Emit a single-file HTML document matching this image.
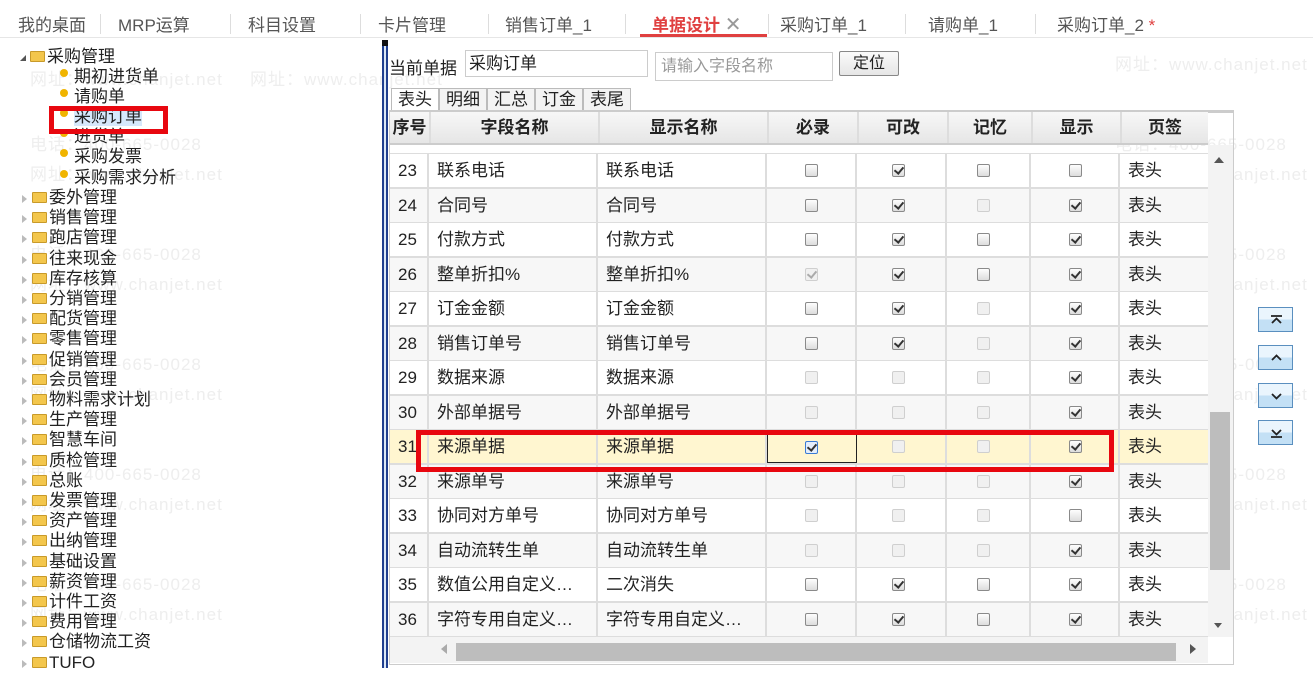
<!DOCTYPE html>
<html><head><meta charset="utf-8"><style>
*{margin:0;padding:0;box-sizing:border-box}
body{width:1313px;height:668px;overflow:hidden;background:#fff;font-family:"Liberation Sans","Noto Sans CJK SC",sans-serif;position:relative;color:#222}
.a{position:absolute;white-space:nowrap}
.tab{position:absolute;top:11px;font-size:17px;color:#555}
.sep{position:absolute;top:14px;width:1px;height:20px;background:#ddd}
.tr{position:absolute;font-size:17px;line-height:20px;left:0}
.fo{display:inline-block;width:15px;height:11px;background:#f3c64c;border:1px solid #c89a2a;border-radius:1px;vertical-align:middle;margin-right:2px;position:relative;top:-1px}
.ar{display:inline-block;width:0;height:0;border-left:5px solid #bbb;border-top:4px solid transparent;border-bottom:4px solid transparent;margin:0 5px 0 22px;vertical-align:middle}
.dot{display:inline-block;width:8px;height:8px;border-radius:50%;background:#f0b400;margin:0 6px 0 60px;vertical-align:middle;position:relative;top:-5px}
.wm{position:absolute;font-size:17px;color:#eee;letter-spacing:1px}
.row{position:absolute;left:390px;width:818px;height:35px;border-bottom:2px solid #ddd;font-size:17px}
.c{position:absolute;top:0;height:100%;border-right:2px solid #ddd;line-height:33px;padding-left:8px}
.cb{position:absolute;top:10px;width:13px;height:13px;border:1px solid #8a8a8a;border-radius:2px;background:linear-gradient(#fdfdfd,#dcdcdc)}
.cb.d{border-color:#cfcfcf;background:#f0f0f0}
.cb.k::after{content:"";position:absolute;left:3px;top:0px;width:4px;height:7px;border-right:2px solid #333;border-bottom:2px solid #333;transform:rotate(40deg)}
.cb.d.k::after{border-color:#aaa}
.btn{position:absolute;left:1258px;width:35px;height:25px;border:1px solid #5a8fbf;background:linear-gradient(#eaf5fd 50%,#c3e0f5 50%)}
.btn svg{position:absolute;left:11px;top:6px}
</style></head><body>
<div class="wm" style="left:30px;top:65px">网址：www.chanjet.net</div>
<div class="wm" style="left:250px;top:65px">网址：www.chanjet.net</div>
<div class="wm" style="left:30px;top:130px">电话：400-665-0028</div>
<div class="wm" style="left:30px;top:160px">网址：www.chanjet.net</div>
<div class="wm" style="left:30px;top:240px">电话：400-665-0028</div>
<div class="wm" style="left:30px;top:270px">网址：www.chanjet.net</div>
<div class="wm" style="left:30px;top:350px">电话：400-665-0028</div>
<div class="wm" style="left:30px;top:380px">网址：www.chanjet.net</div>
<div class="wm" style="left:30px;top:460px">电话：400-665-0028</div>
<div class="wm" style="left:30px;top:490px">网址：www.chanjet.net</div>
<div class="wm" style="left:30px;top:570px">电话：400-665-0028</div>
<div class="wm" style="left:30px;top:600px">网址：www.chanjet.net</div>
<div class="wm" style="left:1115px;top:50px">网址：www.chanjet.net</div>
<div class="wm" style="left:1115px;top:130px">电话：400-665-0028</div>
<div class="wm" style="left:1115px;top:160px">网址：www.chanjet.net</div>
<div class="wm" style="left:1115px;top:240px">电话：400-665-0028</div>
<div class="wm" style="left:1115px;top:270px">网址：www.chanjet.net</div>
<div class="wm" style="left:1115px;top:350px">电话：400-665-0028</div>
<div class="wm" style="left:1115px;top:380px">网址：www.chanjet.net</div>
<div class="wm" style="left:1115px;top:460px">电话：400-665-0028</div>
<div class="wm" style="left:1115px;top:490px">网址：www.chanjet.net</div>
<div class="wm" style="left:1115px;top:570px">电话：400-665-0028</div>
<div class="wm" style="left:1115px;top:600px">网址：www.chanjet.net</div>

<div class="tab" style="left:18px">我的桌面</div><div class="sep" style="left:100px"></div>
<div class="tab" style="left:118px">MRP运算</div><div class="sep" style="left:230px"></div>
<div class="tab" style="left:248px">科目设置</div><div class="sep" style="left:360px"></div>
<div class="tab" style="left:378px">卡片管理</div><div class="sep" style="left:488px"></div>
<div class="tab" style="left:505px">销售订单_1</div><div class="sep" style="left:625px"></div>
<div class="tab" style="left:652px;color:#e04040;font-weight:bold">单据设计 <span style="color:#999;font-weight:normal;font-size:20px;line-height:16px">✕</span></div>
<div class="a" style="left:640px;top:34px;width:127px;height:3px;background:#e04040"></div>
<div class="sep" style="left:768px"></div>
<div class="tab" style="left:780px">采购订单_1</div><div class="sep" style="left:905px"></div>
<div class="tab" style="left:928px">请购单_1</div><div class="sep" style="left:1035px"></div>
<div class="tab" style="left:1057px">采购订单_2 <span style="color:#e04040">*</span></div>
<div class="a" style="left:0;top:37px;width:1313px;height:1px;background:#e6e6e6"></div>

<div class="tr" style="top:47px"><span style="display:inline-block;width:0;height:0;border-right:6px solid #555;border-top:6px solid transparent;margin:0 4px 0 20px;vertical-align:middle"></span><span class="fo"></span>采购管理</div>
<div class="tr" style="top:67px"><span class="dot"></span>期初进货单</div>
<div class="tr" style="top:87px"><span class="dot"></span>请购单</div>
<div class="tr" style="top:107px"><span class="dot"></span><span style="background:#d6e8fb">采购订单</span></div>
<div class="tr" style="top:127px"><span class="dot"></span>进货单</div>
<div class="tr" style="top:147px"><span class="dot"></span>采购发票</div>
<div class="tr" style="top:168px"><span class="dot"></span>采购需求分析</div>
<div class="a" style="left:49px;top:106px;width:119px;height:28px;border:5px solid #e8070f"></div>
<div class="tr" style="top:188px"><span class="ar"></span><span class="fo"></span>委外管理</div>
<div class="tr" style="top:208px"><span class="ar"></span><span class="fo"></span>销售管理</div>
<div class="tr" style="top:228px"><span class="ar"></span><span class="fo"></span>跑店管理</div>
<div class="tr" style="top:249px"><span class="ar"></span><span class="fo"></span>往来现金</div>
<div class="tr" style="top:269px"><span class="ar"></span><span class="fo"></span>库存核算</div>
<div class="tr" style="top:289px"><span class="ar"></span><span class="fo"></span>分销管理</div>
<div class="tr" style="top:309px"><span class="ar"></span><span class="fo"></span>配货管理</div>
<div class="tr" style="top:329px"><span class="ar"></span><span class="fo"></span>零售管理</div>
<div class="tr" style="top:350px"><span class="ar"></span><span class="fo"></span>促销管理</div>
<div class="tr" style="top:370px"><span class="ar"></span><span class="fo"></span>会员管理</div>
<div class="tr" style="top:390px"><span class="ar"></span><span class="fo"></span>物料需求计划</div>
<div class="tr" style="top:410px"><span class="ar"></span><span class="fo"></span>生产管理</div>
<div class="tr" style="top:430px"><span class="ar"></span><span class="fo"></span>智慧车间</div>
<div class="tr" style="top:451px"><span class="ar"></span><span class="fo"></span>质检管理</div>
<div class="tr" style="top:471px"><span class="ar"></span><span class="fo"></span>总账</div>
<div class="tr" style="top:491px"><span class="ar"></span><span class="fo"></span>发票管理</div>
<div class="tr" style="top:511px"><span class="ar"></span><span class="fo"></span>资产管理</div>
<div class="tr" style="top:531px"><span class="ar"></span><span class="fo"></span>出纳管理</div>
<div class="tr" style="top:552px"><span class="ar"></span><span class="fo"></span>基础设置</div>
<div class="tr" style="top:572px"><span class="ar"></span><span class="fo"></span>薪资管理</div>
<div class="tr" style="top:592px"><span class="ar"></span><span class="fo"></span>计件工资</div>
<div class="tr" style="top:612px"><span class="ar"></span><span class="fo"></span>费用管理</div>
<div class="tr" style="top:632px"><span class="ar"></span><span class="fo"></span>仓储物流工资</div>
<div class="tr" style="top:653px"><span class="ar"></span><span class="fo"></span>TUFO</div>

<div class="a" style="left:382px;top:40px;width:6px;height:628px;background:#dbe7f5;border-left:2px solid #1f3f8f;border-right:2px solid #1f3f8f"></div>
<div class="a" style="left:382px;top:40px;width:6px;height:6px;background:#111"></div>

<div class="a" style="left:389px;top:54px;font-size:17px">当前单据</div>
<div class="a" style="left:465px;top:50px;width:183px;height:27px;border:1px solid #ccc;font-size:17px;line-height:26px;padding-left:3px">采购订单</div>
<div class="a" style="left:655px;top:52px;width:178px;height:29px;border:1px solid #ccc;font-size:16px;line-height:28px;padding-left:5px;color:#999">请输入字段名称</div>
<div class="a" style="left:839px;top:51px;width:60px;height:25px;border:1px solid #888;background:linear-gradient(#fafafa,#e6e6e6);font-size:16px;text-align:center;line-height:23px;border-radius:2px">定位</div>
<div class="a" style="left:391px;top:88px;font-size:17px;line-height:22px">
<span style="display:inline-block;border:1px solid #bbb;border-bottom:none;padding:0 6px;background:#fff">表头</span><span style="display:inline-block;border:1px solid #bbb;padding:0 6px;background:#f3f3f3">明细</span><span style="display:inline-block;border:1px solid #bbb;padding:0 6px;background:#f3f3f3">汇总</span><span style="display:inline-block;border:1px solid #bbb;padding:0 6px;background:#f3f3f3">订金</span><span style="display:inline-block;border:1px solid #bbb;padding:0 6px;background:#f3f3f3">表尾</span></div>

<div class="a" style="left:389px;top:110px;width:845px;height:555px;border:1px solid #ccc;border-top:3px solid #ccc"></div>
<div class="a" style="left:390px;top:112px;width:818px;height:33px;background:linear-gradient(#f7f7f7,#e6e6e6);border-bottom:2px solid #ccc;font-size:17px;font-weight:bold;line-height:31px">
<div class="a" style="left:0;width:39px;text-align:center">序号</div>
<div class="a" style="left:39px;width:169px;text-align:center;border-left:2px solid #ddd">字段名称</div>
<div class="a" style="left:208px;width:169px;text-align:center;border-left:2px solid #ddd">显示名称</div>
<div class="a" style="left:377px;width:90px;text-align:center;border-left:2px solid #ddd">必录</div>
<div class="a" style="left:467px;width:90px;text-align:center;border-left:2px solid #ddd">可改</div>
<div class="a" style="left:557px;width:84px;text-align:center;border-left:2px solid #ddd">记忆</div>
<div class="a" style="left:641px;width:89px;text-align:center;border-left:2px solid #ddd">显示</div>
<div class="a" style="left:730px;width:88px;text-align:center;border-left:2px solid #ddd">页签</div>
</div>
<div class="a" style="left:390px;top:145px;width:818px;height:10px;border-bottom:2px solid #ddd"></div>

<div class="row" style="top:154px;background:#fff"><div class="c" style="left:0;width:39px">23</div><div class="c" style="left:39px;width:169px">联系电话</div><div class="c" style="left:208px;width:169px">联系电话</div><div class="c" style="left:377px;width:90px"><i class="cb" style="left:38px"></i></div><div class="c" style="left:467px;width:90px"><i class="cb k" style="left:35px"></i></div><div class="c" style="left:557px;width:84px"><i class="cb" style="left:30px"></i></div><div class="c" style="left:641px;width:89px"><i class="cb" style="left:38px"></i></div><div class="c" style="left:730px;width:88px;border:none">表头</div></div>
<div class="row" style="top:189px;background:#f7f7f7"><div class="c" style="left:0;width:39px">24</div><div class="c" style="left:39px;width:169px">合同号</div><div class="c" style="left:208px;width:169px">合同号</div><div class="c" style="left:377px;width:90px"><i class="cb" style="left:38px"></i></div><div class="c" style="left:467px;width:90px"><i class="cb k" style="left:35px"></i></div><div class="c" style="left:557px;width:84px"><i class="cb d" style="left:30px"></i></div><div class="c" style="left:641px;width:89px"><i class="cb k" style="left:38px"></i></div><div class="c" style="left:730px;width:88px;border:none">表头</div></div>
<div class="row" style="top:223px;background:#fff"><div class="c" style="left:0;width:39px">25</div><div class="c" style="left:39px;width:169px">付款方式</div><div class="c" style="left:208px;width:169px">付款方式</div><div class="c" style="left:377px;width:90px"><i class="cb" style="left:38px"></i></div><div class="c" style="left:467px;width:90px"><i class="cb k" style="left:35px"></i></div><div class="c" style="left:557px;width:84px"><i class="cb" style="left:30px"></i></div><div class="c" style="left:641px;width:89px"><i class="cb k" style="left:38px"></i></div><div class="c" style="left:730px;width:88px;border:none">表头</div></div>
<div class="row" style="top:258px;background:#f7f7f7"><div class="c" style="left:0;width:39px">26</div><div class="c" style="left:39px;width:169px">整单折扣%</div><div class="c" style="left:208px;width:169px">整单折扣%</div><div class="c" style="left:377px;width:90px"><i class="cb d k" style="left:38px"></i></div><div class="c" style="left:467px;width:90px"><i class="cb k" style="left:35px"></i></div><div class="c" style="left:557px;width:84px"><i class="cb" style="left:30px"></i></div><div class="c" style="left:641px;width:89px"><i class="cb k" style="left:38px"></i></div><div class="c" style="left:730px;width:88px;border:none">表头</div></div>
<div class="row" style="top:292px;background:#fff"><div class="c" style="left:0;width:39px">27</div><div class="c" style="left:39px;width:169px">订金金额</div><div class="c" style="left:208px;width:169px">订金金额</div><div class="c" style="left:377px;width:90px"><i class="cb" style="left:38px"></i></div><div class="c" style="left:467px;width:90px"><i class="cb k" style="left:35px"></i></div><div class="c" style="left:557px;width:84px"><i class="cb d" style="left:30px"></i></div><div class="c" style="left:641px;width:89px"><i class="cb k" style="left:38px"></i></div><div class="c" style="left:730px;width:88px;border:none">表头</div></div>
<div class="row" style="top:327px;background:#f7f7f7"><div class="c" style="left:0;width:39px">28</div><div class="c" style="left:39px;width:169px">销售订单号</div><div class="c" style="left:208px;width:169px">销售订单号</div><div class="c" style="left:377px;width:90px"><i class="cb" style="left:38px"></i></div><div class="c" style="left:467px;width:90px"><i class="cb k" style="left:35px"></i></div><div class="c" style="left:557px;width:84px"><i class="cb d" style="left:30px"></i></div><div class="c" style="left:641px;width:89px"><i class="cb k" style="left:38px"></i></div><div class="c" style="left:730px;width:88px;border:none">表头</div></div>
<div class="row" style="top:361px;background:#fff"><div class="c" style="left:0;width:39px">29</div><div class="c" style="left:39px;width:169px">数据来源</div><div class="c" style="left:208px;width:169px">数据来源</div><div class="c" style="left:377px;width:90px"><i class="cb d" style="left:38px"></i></div><div class="c" style="left:467px;width:90px"><i class="cb d" style="left:35px"></i></div><div class="c" style="left:557px;width:84px"><i class="cb d" style="left:30px"></i></div><div class="c" style="left:641px;width:89px"><i class="cb k" style="left:38px"></i></div><div class="c" style="left:730px;width:88px;border:none">表头</div></div>
<div class="row" style="top:396px;background:#f7f7f7"><div class="c" style="left:0;width:39px">30</div><div class="c" style="left:39px;width:169px">外部单据号</div><div class="c" style="left:208px;width:169px">外部单据号</div><div class="c" style="left:377px;width:90px"><i class="cb d" style="left:38px"></i></div><div class="c" style="left:467px;width:90px"><i class="cb d" style="left:35px"></i></div><div class="c" style="left:557px;width:84px"><i class="cb d" style="left:30px"></i></div><div class="c" style="left:641px;width:89px"><i class="cb k" style="left:38px"></i></div><div class="c" style="left:730px;width:88px;border:none">表头</div></div>
<div class="row" style="top:430px;background:#fff6d0"><div class="c" style="left:0;width:39px">31</div><div class="c" style="left:39px;width:169px">来源单据</div><div class="c" style="left:208px;width:169px">来源单据</div><div class="c" style="left:377px;width:90px;border:1px solid #222"><i class="cb k" style="left:37px;border-color:#3a7bd5;background:#e4eefc"></i></div><div class="c" style="left:467px;width:90px"><i class="cb d" style="left:35px"></i></div><div class="c" style="left:557px;width:84px"><i class="cb d" style="left:30px"></i></div><div class="c" style="left:641px;width:89px"><i class="cb k" style="left:38px"></i></div><div class="c" style="left:730px;width:88px;border:none">表头</div></div>
<div class="row" style="top:465px;background:#f7f7f7"><div class="c" style="left:0;width:39px">32</div><div class="c" style="left:39px;width:169px">来源单号</div><div class="c" style="left:208px;width:169px">来源单号</div><div class="c" style="left:377px;width:90px"><i class="cb d" style="left:38px"></i></div><div class="c" style="left:467px;width:90px"><i class="cb d" style="left:35px"></i></div><div class="c" style="left:557px;width:84px"><i class="cb d" style="left:30px"></i></div><div class="c" style="left:641px;width:89px"><i class="cb k" style="left:38px"></i></div><div class="c" style="left:730px;width:88px;border:none">表头</div></div>
<div class="row" style="top:499px;background:#fff"><div class="c" style="left:0;width:39px">33</div><div class="c" style="left:39px;width:169px">协同对方单号</div><div class="c" style="left:208px;width:169px">协同对方单号</div><div class="c" style="left:377px;width:90px"><i class="cb d" style="left:38px"></i></div><div class="c" style="left:467px;width:90px"><i class="cb d" style="left:35px"></i></div><div class="c" style="left:557px;width:84px"><i class="cb d" style="left:30px"></i></div><div class="c" style="left:641px;width:89px"><i class="cb" style="left:38px"></i></div><div class="c" style="left:730px;width:88px;border:none">表头</div></div>
<div class="row" style="top:534px;background:#f7f7f7"><div class="c" style="left:0;width:39px">34</div><div class="c" style="left:39px;width:169px">自动流转生单</div><div class="c" style="left:208px;width:169px">自动流转生单</div><div class="c" style="left:377px;width:90px"><i class="cb d" style="left:38px"></i></div><div class="c" style="left:467px;width:90px"><i class="cb d" style="left:35px"></i></div><div class="c" style="left:557px;width:84px"><i class="cb d" style="left:30px"></i></div><div class="c" style="left:641px;width:89px"><i class="cb k" style="left:38px"></i></div><div class="c" style="left:730px;width:88px;border:none">表头</div></div>
<div class="row" style="top:568px;background:#fff"><div class="c" style="left:0;width:39px">35</div><div class="c" style="left:39px;width:169px">数值公用自定义…</div><div class="c" style="left:208px;width:169px">二次消失</div><div class="c" style="left:377px;width:90px"><i class="cb" style="left:38px"></i></div><div class="c" style="left:467px;width:90px"><i class="cb k" style="left:35px"></i></div><div class="c" style="left:557px;width:84px"><i class="cb" style="left:30px"></i></div><div class="c" style="left:641px;width:89px"><i class="cb k" style="left:38px"></i></div><div class="c" style="left:730px;width:88px;border:none">表头</div></div>
<div class="row" style="top:603px;background:#f7f7f7"><div class="c" style="left:0;width:39px">36</div><div class="c" style="left:39px;width:169px">字符专用自定义…</div><div class="c" style="left:208px;width:169px">字符专用自定义…</div><div class="c" style="left:377px;width:90px"><i class="cb" style="left:38px"></i></div><div class="c" style="left:467px;width:90px"><i class="cb k" style="left:35px"></i></div><div class="c" style="left:557px;width:84px"><i class="cb" style="left:30px"></i></div><div class="c" style="left:641px;width:89px"><i class="cb k" style="left:38px"></i></div><div class="c" style="left:730px;width:88px;border:none">表头</div></div>

<div class="a" style="left:416px;top:430px;width:698px;height:42px;border:5px solid #e8070f"></div>

<div class="a" style="left:1208px;top:145px;width:25px;height:492px;background:#f3f3f3"></div>
<div class="a" style="left:1214px;top:157px;border-bottom:6px solid #555;border-left:5px solid transparent;border-right:5px solid transparent"></div>
<div class="a" style="left:1210px;top:412px;width:20px;height:158px;background:#bdbdbd"></div>
<div class="a" style="left:1214px;top:623px;border-top:5px solid #555;border-left:4px solid transparent;border-right:4px solid transparent"></div>
<div class="a" style="left:390px;top:637px;width:818px;height:26px;background:#f3f3f3"></div>
<div class="a" style="left:441px;top:644px;border-right:6px solid #aaa;border-top:5px solid transparent;border-bottom:5px solid transparent"></div>
<div class="a" style="left:456px;top:643px;width:720px;height:18px;background:#bdbdbd"></div>
<div class="a" style="left:1190px;top:644px;border-left:6px solid #555;border-top:5px solid transparent;border-bottom:5px solid transparent"></div>

<div class="btn" style="top:307px"><svg width="13" height="12"><path d="M1 2H12M2 9L6.5 4.5L11 9" stroke="#222" stroke-width="1.8" fill="none"/></svg></div>
<div class="btn" style="top:345px"><svg width="13" height="12"><path d="M2 8L6.5 3.5L11 8" stroke="#222" stroke-width="1.8" fill="none"/></svg></div>
<div class="btn" style="top:383px"><svg width="13" height="12"><path d="M2 4L6.5 8.5L11 4" stroke="#222" stroke-width="1.8" fill="none"/></svg></div>
<div class="btn" style="top:420px"><svg width="13" height="12"><path d="M2 3L6.5 7.5L11 3M1 10H12" stroke="#222" stroke-width="1.8" fill="none"/></svg></div>
</body></html>
